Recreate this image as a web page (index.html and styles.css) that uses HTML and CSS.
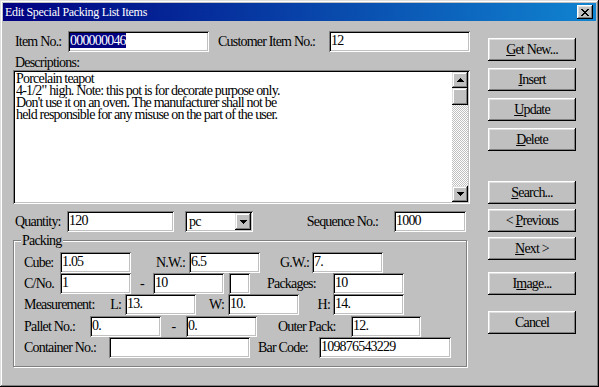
FILE: index.html
```html
<!DOCTYPE html>
<html lang="en">
<head>
  <meta charset="UTF-8" />
  <title>Edit Special Packing List Items</title>
  <link rel="stylesheet" href="styles.css">
</head>
<body>
  <div class="window">
    <div class="titlebar">
      <span class="title">Edit Special Packing List Items</span>
      <button class="close-btn" type="button">
        <svg width="8" height="7" viewBox="0 0 8 7" shape-rendering="crispEdges"><path d="M0 0h2v1h1v1h2V1h1V0h2v1H7v1H6v1H5v1h1v1h1v1h1v1H6V6H5V5H3v1H2v1H0V6h1V5h1V4h1V3H2V2H1V1H0z" fill="#000"/></svg>
      </button>
    </div>

    <div class="body">
      <div class="main">
        <div class="row">
          <label class="lbl lbl-item">Item No.:</label>
          <div class="field w141"><span class="sel">000000046</span></div>
          <label class="lbl lbl-cust">Customer Item No.:</label>
          <div class="field w141">12</div>
        </div>

        <div class="desc-label">Descriptions:</div>
        <div class="memo">
          <div class="memo-text">Porcelain teapot
4-1/2" high. Note: this pot is for decorate purpose only.
Don't use it on an oven. The manufacturer shall not be
held responsible for any misuse on the part of the user.</div>
          <div class="vscroll">
            <div class="sb-btn">
              <svg width="7" height="4" viewBox="0 0 7 4" shape-rendering="crispEdges"><path d="M3 0h1v1h1v1h1v1h1v1H0V3h1V2h1V1h1z" fill="#000"/></svg>
            </div>
            <div class="sb-thumb"></div>
            <div class="sb-track"></div>
            <div class="sb-btn">
              <svg width="7" height="4" viewBox="0 0 7 4" shape-rendering="crispEdges"><path d="M0 0h7v1H6v1H5v1H4v1H3V3H2V2H1V1H0z" fill="#000"/></svg>
            </div>
          </div>
        </div>

        <div class="row qty-row">
          <label class="lbl lbl-qty">Quantity:</label>
          <div class="field w107">120</div>
          <div class="combo">
            <span class="combo-text">pc</span>
            <span class="combo-btn">
              <svg width="7" height="4" viewBox="0 0 7 4" shape-rendering="crispEdges"><path d="M0 0h7v1H6v1H5v1H4v1H3V3H2V2H1V1H0z" fill="#000"/></svg>
            </span>
          </div>
          <label class="lbl lbl-seq">Sequence No.:</label>
          <div class="field w72">1000</div>
        </div>

        <div class="group">
          <span class="group-title">Packing</span>

          <div class="row">
            <label class="lbl lbl-cube">Cube:</label>
            <div class="field w71">1.05</div>
            <label class="lbl lbl-nw">N.W.:</label>
            <div class="field w71">6.5</div>
            <label class="lbl lbl-gw">G.W.:</label>
            <div class="field w71">7.</div>
          </div>

          <div class="row">
            <label class="lbl lbl-cube">C/No.</label>
            <div class="field w71">1</div>
            <span class="lbl dash">-</span>
            <div class="field w71">10</div>
            <div class="field w21 ml5"></div>
            <label class="lbl lbl-pkgs">Packages:</label>
            <div class="field w71">10</div>
          </div>

          <div class="row">
            <label class="lbl lbl-meas">Measurement:</label>
            <label class="lbl lbl-l">L:</label>
            <div class="field w71">13.</div>
            <label class="lbl lbl-w">W:</label>
            <div class="field w71">10.</div>
            <label class="lbl lbl-h">H:</label>
            <div class="field w71">14.</div>
          </div>

          <div class="row row-gap">
            <label class="lbl lbl-pallet">Pallet No.:</label>
            <div class="field w71">0.</div>
            <span class="lbl dash dash-wide">-</span>
            <div class="field w71">0.</div>
            <label class="lbl lbl-outer">Outer Pack:</label>
            <div class="field w70">12.</div>
          </div>

          <div class="row">
            <label class="lbl lbl-cont">Container No.:</label>
            <div class="field w141"></div>
            <label class="lbl lbl-bar">Bar Code:</label>
            <div class="field w132">109876543229</div>
          </div>
        </div>
      </div>

      <div class="side">
        <div class="btn-stack">
          <button class="btn" type="button"><u>G</u>et New...</button>
          <button class="btn" type="button"><u>I</u>nsert</button>
          <button class="btn" type="button"><u>U</u>pdate</button>
          <button class="btn" type="button"><u>D</u>elete</button>
        </div>
        <div class="btn-stack nav-stack">
          <button class="btn" type="button"><u>S</u>earch...</button>
          <button class="btn" type="button">&lt; <u>P</u>revious</button>
          <button class="btn" type="button"><u>N</u>ext &gt;</button>
        </div>
        <button class="btn btn-image" type="button">I<u>m</u>age...</button>
        <button class="btn btn-cancel" type="button">Cancel</button>
      </div>
    </div>
  </div>
</body>
</html>
```

FILE: styles.css
```css
* {
  box-sizing: border-box;
  margin: 0;
  padding: 0;
}
body {
  background: #c0c0c0;
  font-family: "Liberation Serif", "Times New Roman", serif;
  font-size: 14px;
  letter-spacing: -0.8px;
  color: #000;
}
.window {
  width: 599px;
  height: 387px;
  padding: 3px;
  background: #c0c0c0;
  box-shadow: inset -1px -1px #000, inset 1px 1px #dfdfdf,
              inset -2px -2px #808080, inset 2px 2px #fff;
}

/* title bar */
.titlebar {
  height: 18px;
  display: flex;
  align-items: center;
  justify-content: space-between;
  padding: 0 3px 0 2px;
  background: linear-gradient(to right, #000080, #1084d0);
  color: #fff;
  line-height: 18px;
}
.title {
  font-size: 12px;
  letter-spacing: -0.3px;
}
.close-btn {
  width: 16px;
  height: 14px;
  border: none;
  background: #c0c0c0;
  display: flex;
  align-items: center;
  justify-content: center;
  box-shadow: inset -1px -1px #000, inset 1px 1px #fff,
              inset -2px -2px #808080, inset 2px 2px #dfdfdf;
}

/* layout */
.body {
  display: flex;
  padding: 10px 0 0 10px;
}
.main {
  width: 457px;
}
.side {
  width: 88px;
  margin-left: 18px;
  padding-top: 7px;
}

.row {
  display: flex;
  align-items: center;
  height: 21px;
}
.row-gap {
  margin-top: 1px;
}
.lbl {
  flex: none;
  white-space: nowrap;
  line-height: 21px;
}

/* sunken text boxes */
.field {
  flex: none;
  height: 21px;
  padding: 2px 2px 0;
  line-height: 15px;
  background: #fff;
  white-space: nowrap;
  overflow: hidden;
  box-shadow: inset 1px 1px #808080, inset -1px -1px #fff,
              inset 2px 2px #000, inset -2px -2px #c0c0c0;
}
.sel {
  background: #000080;
  color: #fff;
}
.w21 { width: 21px; }
.w70 { width: 70px; }
.w71 { width: 71px; }
.w72 { width: 72px; }
.w107 { width: 107px; }
.w132 { width: 132px; }
.w141 { width: 141px; }
.ml5 { margin-left: 5px; }

.lbl-item { width: 55px; padding-left: 2px; }
.lbl-cust { width: 120px; padding-left: 9px; }
.lbl-qty { width: 54px; padding-left: 2px; }
.lbl-seq { width: 141px; text-align: right; padding-right: 16px; }

/* description memo */
.desc-label {
  padding: 4px 0 0 2px;
  height: 18px;
  line-height: 14px;
}
.memo {
  display: flex;
  height: 134px;
  padding: 2px;
  background: #fff;
  box-shadow: inset 1px 1px #808080, inset -1px -1px #fff,
              inset 2px 2px #000, inset -2px -2px #c0c0c0;
}
.memo-text {
  flex: 1;
  padding: 1px 0 0 1px;
  line-height: 12px;
  white-space: pre;
  overflow: hidden;
}
.vscroll {
  width: 16px;
  display: flex;
  flex-direction: column;
  background: repeating-conic-gradient(#fff 0 25%, #c0c0c0 0 50%) 0 0 / 2px 2px;
}
.sb-btn, .sb-thumb, .combo-btn {
  flex: none;
  background: #c0c0c0;
  box-shadow: inset -1px -1px #000, inset 1px 1px #dfdfdf,
              inset -2px -2px #808080, inset 2px 2px #fff;
}
.sb-btn {
  height: 16px;
  display: flex;
  align-items: center;
  justify-content: center;
}
.sb-thumb {
  height: 17px;
}
.sb-track {
  flex: 1;
}

/* quantity row */
.qty-row {
  margin-top: 7px;
}
.combo {
  flex: none;
  display: flex;
  width: 68px;
  height: 21px;
  margin-left: 11px;
  padding: 2px;
  background: #fff;
  box-shadow: inset 1px 1px #808080, inset -1px -1px #fff,
              inset 2px 2px #000, inset -2px -2px #c0c0c0;
}
.combo-text {
  flex: 1;
  padding-left: 2px;
  line-height: 17px;
}
.combo-btn {
  width: 16px;
  height: 17px;
  display: flex;
  align-items: center;
  justify-content: center;
}

/* packing group */
.group {
  position: relative;
  height: 127px;
  margin-top: 8px;
  padding: 11px 0 0 10px;
  border: 1px solid #808080;
  width: 454px;
  box-shadow: inset 1px 1px #fff, 1px 1px #fff;
}
.group-title {
  position: absolute;
  top: -8px;
  left: 7px;
  padding: 0 1px;
  line-height: 15px;
  background: #c0c0c0;
}
.lbl-cube { width: 36px; }
.lbl-nw { width: 58px; text-align: right; padding-right: 4px; }
.lbl-gw { width: 52px; text-align: right; padding-right: 3px; }
.dash { width: 22px; text-align: center; }
.dash-wide { width: 25px; }
.lbl-pkgs { width: 83px; padding-left: 17px; }
.lbl-meas { width: 80px; }
.lbl-l { width: 21px; text-align: right; padding-right: 4px; }
.lbl-w { width: 32px; text-align: right; padding-right: 4px; }
.lbl-h { width: 34px; text-align: right; padding-right: 3px; }
.lbl-pallet { width: 66px; }
.lbl-outer { width: 94px; padding-left: 21px; }
.lbl-cont { width: 85px; }
.lbl-bar { width: 69px; padding-left: 8px; }

/* push buttons */
.btn-stack {
  display: flex;
  flex-direction: column;
  gap: 7px;
}
.nav-stack {
  gap: 5px;
  margin-top: 30px;
}
.btn {
  display: block;
  width: 88px;
  height: 23px;
  border: none;
  background: #c0c0c0;
  color: #000;
  font: inherit;
  letter-spacing: inherit;
  line-height: 21px;
  box-shadow: inset -1px -1px #000, inset 1px 1px #fff,
              inset -2px -2px #808080, inset 2px 2px #dfdfdf;
}
.btn-image {
  margin-top: 12px;
}
.btn-cancel {
  margin-top: 16px;
}
```
